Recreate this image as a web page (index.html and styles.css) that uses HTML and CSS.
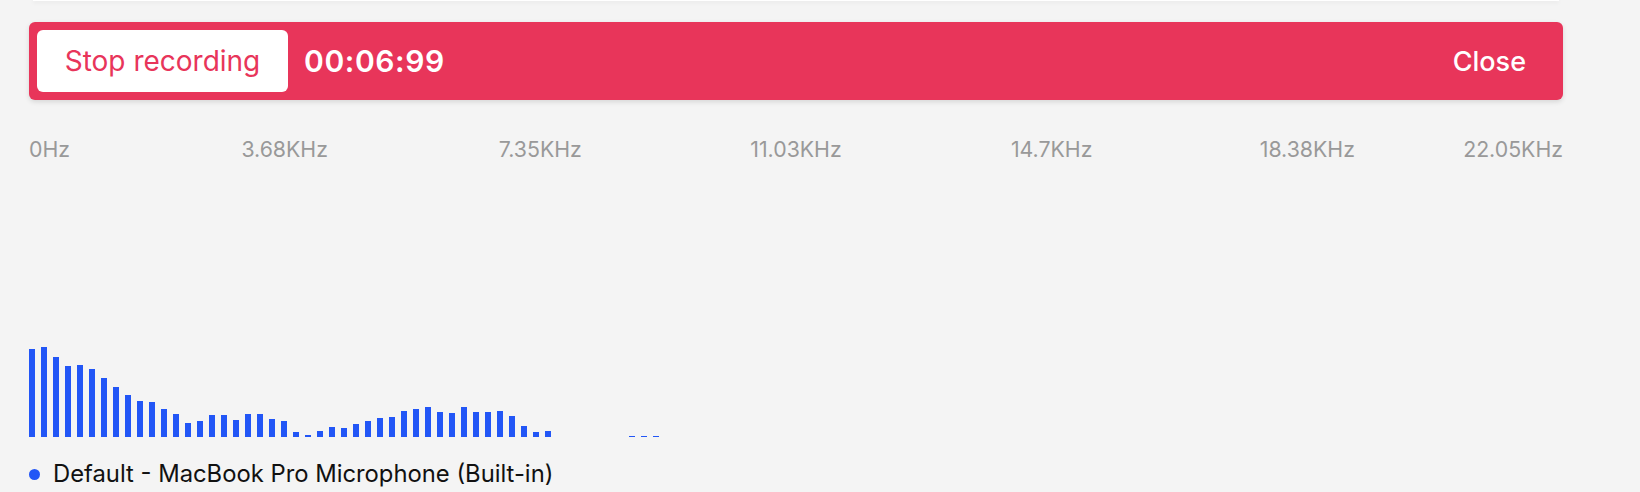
FILE: index.html
```html
<!DOCTYPE html>
<html lang="en">
<head>
<meta charset="utf-8">
<title>Recorder</title>
<link rel="stylesheet" href="styles.css">
</head>
<body>
<div class="top-card"></div>
<main class="panel">
  <div class="record-bar">
    <button class="stop-btn">Stop recording</button>
    <span class="timer">00:06:99</span>
    <button class="close-btn">Close</button>
  </div>
  <div class="freq-axis">
    <span class="tick first">0Hz</span>
    <span class="tick t1">3.68KHz</span>
    <span class="tick t2">7.35KHz</span>
    <span class="tick t3">11.03KHz</span>
    <span class="tick t4">14.7KHz</span>
    <span class="tick t5">18.38KHz</span>
    <span class="tick last">22.05KHz</span>
  </div>
  <div class="spectrum">
    <i style="height:88px"></i><i style="height:90px"></i><i style="height:80px"></i><i style="height:71px"></i><i style="height:72px"></i><i style="height:68px"></i><i style="height:59px"></i><i style="height:50px"></i><i style="height:42px"></i><i style="height:36px"></i><i style="height:35px"></i><i style="height:28px"></i><i style="height:23px"></i><i style="height:14px"></i><i style="height:16px"></i><i style="height:22px"></i><i style="height:22px"></i><i style="height:17px"></i><i style="height:23px"></i><i style="height:23px"></i><i style="height:18px"></i><i style="height:16px"></i><i style="height:5px"></i><i style="height:2px"></i><i style="height:6px"></i><i style="height:10px"></i><i style="height:9px"></i><i style="height:13px"></i><i style="height:16px"></i><i style="height:19px"></i><i style="height:20px"></i><i style="height:26px"></i><i style="height:28px"></i><i style="height:30px"></i><i style="height:25px"></i><i style="height:24px"></i><i style="height:30px"></i><i style="height:25px"></i><i style="height:25px"></i><i style="height:26px"></i><i style="height:21px"></i><i style="height:11px"></i><i style="height:5px"></i><i style="height:6px"></i><i style="height:0px"></i><i style="height:0px"></i><i style="height:0px"></i><i style="height:0px"></i><i style="height:0px"></i><i style="height:0px"></i><i style="height:1px"></i><i style="height:1px"></i><i style="height:1px"></i>
  </div>
  <div class="legend">
    <span class="dot"></span>
    <span class="legend-label">Default - MacBook Pro Microphone (Built-in)</span>
  </div>
</main>
</body>
</html>
```

FILE: styles.css
```css
* { box-sizing: border-box; }

html, body {
  margin: 0;
  padding: 0;
  background: #f4f4f4;
  font-family: Inter, "Noto Sans", sans-serif;
  overflow: hidden;
}

.top-card {
  height: 1px;
  margin: 0 81px 0 33px;
  background: #ffffff;
  box-shadow: 0 1px 4px rgba(0, 0, 0, 0.14);
}

.panel {
  width: 1534px;
  margin-left: 29px;
  padding-top: 21px;
}

.record-bar {
  display: flex;
  align-items: center;
  height: 78px;
  padding: 8px 37px 8px 8px;
  background: #e8355a;
  border-radius: 6px;
  box-shadow: 0 2px 5px rgba(0, 0, 0, 0.12);
}

.stop-btn {
  height: 62px;
  width: 251px;
  border: 0;
  border-radius: 6px;
  background: #ffffff;
  color: #e8355a;
  font-family: Inter, sans-serif;
  font-size: 28px;
  font-weight: 400;
  padding: 0;
}

.timer {
  margin-left: 16px;
  color: #ffffff;
  font-size: 30px;
  font-weight: 600;
  letter-spacing: 0.6px;
}

.close-btn {
  margin-left: auto;
  border: 0;
  padding: 0;
  background: transparent;
  color: #ffffff;
  font-family: Inter, sans-serif;
  font-size: 27px;
  font-weight: 500;
}

.freq-axis {
  display: grid;
  grid-template-columns: repeat(12, 1fr);
  margin-top: 36px;
  line-height: 26px;
  font-size: 21.3px;
  color: #999999;
}

.tick { justify-self: center; white-space: nowrap; }
.tick.first { grid-column: 1 / 2; justify-self: start; }
.tick.t1 { grid-column: 2 / 4; }
.tick.t2 { grid-column: 4 / 6; }
.tick.t3 { grid-column: 6 / 8; }
.tick.t4 { grid-column: 8 / 10; }
.tick.t5 { grid-column: 10 / 12; }
.tick.last { grid-column: 12 / 13; justify-self: end; }

.spectrum {
  display: flex;
  align-items: flex-end;
  gap: 6px;
  height: 275px;
}

.spectrum i {
  display: block;
  flex: 0 0 6px;
  width: 6px;
  background: #2256f6;
}

.legend {
  display: flex;
  align-items: center;
  gap: 13px;
  margin-top: 23px;
  line-height: 28px;
}

.dot {
  width: 11px;
  height: 11px;
  border-radius: 50%;
  background: #2256f6;
}

.legend-label {
  font-size: 23.8px;
  color: #111111;
}
```
